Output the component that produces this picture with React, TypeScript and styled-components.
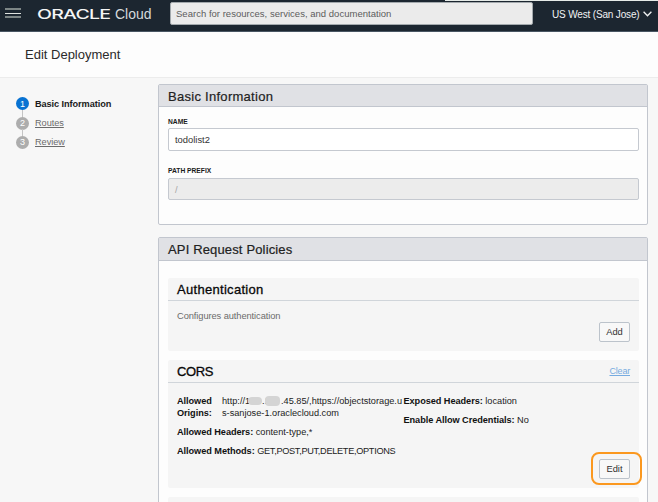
import React from 'react';
import styled, { createGlobalStyle } from 'styled-components';

const GlobalStyle = createGlobalStyle`
  *, *::before, *::after { box-sizing: border-box; }
  html, body { margin: 0; padding: 0; }
  body {
    background: #f7f7f7;
    color: #161616;
    font-family: "Liberation Sans", Arial, sans-serif;
    font-size: 9.5px;
    overflow: hidden;
  }
`;

const Page = styled.div`
  height: 502px;
  overflow: hidden;
  background: #f7f7f7;
`;

const TopBar = styled.header`
  position: relative;
  display: flex;
  align-items: flex-start;
  height: 32px;
  background: #1c2630;
  border-bottom: 1px solid #495663;
`;

const TopStrip = styled.div`
  position: absolute;
  top: 0;
  left: 445px;
  right: 0;
  height: 1px;
  background: #e6ebe8;
`;

const MenuButton = styled.button`
  display: flex;
  flex-direction: column;
  justify-content: space-between;
  width: 16px;
  height: 10px;
  margin: 8px 0 0 5px;
  padding: 0;
  border: 0;
  background: none;
`;

const MenuLine = styled.span<{ $bright?: boolean }>`
  height: ${(p) => (p.$bright ? 1 : 2)}px;
  background: ${(p) => (p.$bright ? '#dfe2df' : '#7d8686')};
`;

const Brand = styled.svg`
  width: 116px;
  height: 20px;
  margin: 4px 0 0 16px;
  fill: #f4f5f5;
`;

const SearchBox = styled.div`
  width: 363px;
  height: 23px;
  margin: 2px 0 0 17px;
  padding-left: 5px;
  border: 1px solid #a3a9ad;
  border-radius: 2px;
  background: #ebebeb;
  color: #5c5c5c;
  font: 9.5px/22px "Liberation Sans", Arial, sans-serif;
  letter-spacing: 0.02px;
  white-space: nowrap;
`;

const Region = styled.div`
  display: flex;
  align-items: center;
  gap: 3px;
  height: 12px;
  margin: 8px 0 0 19px;
  color: #f1f2f3;
  font-size: 10px;
  letter-spacing: -0.16px;
  white-space: nowrap;
`;

const TitleBar = styled.div`
  height: 46px;
  padding-left: 25px;
  border-bottom: 1px solid #ececec;
  background: #fdfdfd;
`;

const PageTitle = styled.h1`
  margin: 0;
  color: #2b2b2b;
  font-size: 13px;
  font-weight: 400;
  line-height: 46px;
`;

const Body = styled.div`
  display: grid;
  grid-template-columns: 158px 490px;
`;

const Steps = styled.ol`
  margin: 16px 0 0 16px;
  padding: 0;
  list-style: none;
`;

const Step = styled.li<{ $active?: boolean }>`
  position: relative;
  display: flex;
  align-items: center;
  gap: 6px;
  height: 19.4px;
  color: ${(p) => (p.$active ? '#1b1b1b' : '#6b6b6b')};
  font-size: 9.2px;
  font-weight: ${(p) => (p.$active ? 700 : 400)};
  letter-spacing: ${(p) => (p.$active ? '-0.08px' : '-0.05px')};

  &:not(:last-child)::after {
    content: '';
    position: absolute;
    left: 6px;
    top: 16px;
    width: 1px;
    height: 7px;
    background: #c4c4c4;
  }
`;

const StepName = styled.span<{ $active?: boolean }>`
  text-decoration: ${(p) => (p.$active ? 'none' : 'underline')};
`;

const StepBadge = styled.span<{ $active?: boolean }>`
  display: inline-flex;
  align-items: center;
  justify-content: center;
  width: 13px;
  height: 13px;
  border-radius: 50%;
  background: ${(p) => (p.$active ? '#0872d2' : '#adadad')};
  color: #fff;
  font-size: 9px;
  font-weight: 400;
`;

const Content = styled.main`
  padding-top: 6px;
`;

const Panel = styled.section<{ $height: number; $headerHeight: number }>`
  display: grid;
  grid-template-rows: ${(p) => p.$headerHeight}px 1fr;
  height: ${(p) => p.$height}px;
  margin-bottom: 12px;
  border: 1px solid #c2c6ce;
  border-radius: 2px;
  background: #fdfdfd;
`;

const PanelTitle = styled.h2<{ $tracking: number }>`
  margin: 0;
  padding-left: 9px;
  border-bottom: 1px solid #c2c6ce;
  background: #e0e1e5;
  color: #222;
  font-size: 13px;
  font-weight: 400;
  letter-spacing: ${(p) => p.$tracking}px;
  line-height: 23px;
  -webkit-text-stroke: 0.2px #222;
`;

const Form = styled.div`
  padding: 9px 8px 0 9px;
`;

const Field = styled.div`
  display: flex;
  flex-direction: column;
  height: 49px;
`;

const Label = styled.label`
  flex: 1;
  max-height: 12px;
  color: #1a1a1a;
  font-size: 6.7px;
  font-weight: 700;
  line-height: 11px;
`;

const Input = styled.div<{ $disabled?: boolean }>`
  height: ${(p) => (p.$disabled ? 22 : 23)}px;
  margin-top: ${(p) => (p.$disabled ? 1 : 0)}px;
  padding-left: 6px;
  border: 1px solid #c5c9d0;
  border-radius: 2px;
  background: ${(p) => (p.$disabled ? '#ececec' : '#fff')};
  color: ${(p) => (p.$disabled ? '#a5a5a5' : '#333')};
  font-size: 9.4px;
  line-height: 22px;
`;

const Cards = styled.div`
  display: flex;
  flex-direction: column;
  gap: 9px;
  padding: 17px 8px 0 9px;
`;

const Card = styled.article<{ $height: number }>`
  display: grid;
  grid-template-rows: 23px 1fr;
  height: ${(p) => p.$height}px;
  border-radius: 2px;
  background: #f5f5f5;
`;

const CardHead = styled.div`
  display: flex;
  justify-content: space-between;
  padding: 0 9px;
  border-bottom: 1px solid #d0d5da;
  line-height: 24px;
`;

const CardTitle = styled.h3<{ $tracking: number }>`
  margin: 0;
  color: #080808;
  font-size: 13px;
  font-weight: 400;
  letter-spacing: ${(p) => p.$tracking}px;
  -webkit-text-stroke: 0.3px #080808;
`;

const ClearLink = styled.a`
  color: #76abe0;
  font-size: 9px;
  letter-spacing: -0.2px;
  line-height: 22px;
  text-decoration: underline;
`;

const CardBody = styled.div`
  display: flex;
  flex-direction: column;
  justify-content: space-between;
  padding: 9px;
`;

const Hint = styled.p`
  margin: 0;
  color: #6b6b6b;
  font-size: 9.3px;
  letter-spacing: -0.08px;
  line-height: 12px;
`;

const ActionButton = styled.button`
  position: relative;
  align-self: flex-end;
  width: 31px;
  height: 20px;
  padding: 0;
  border: 1px solid #bcc3cb;
  border-radius: 2px;
  background: #f8f8f8;
  color: #303030;
  font: 9.3px/18px "Liberation Sans", Arial, sans-serif;
`;

const Highlight = styled.span`
  position: absolute;
  inset: -8px -13px -7px -9px;
  border: 2px solid #fb981f;
  border-radius: 8px;
`;

const Policies = styled.div`
  display: grid;
  grid-template-columns: 226.5px 1fr;
  color: #222;
  font-size: 9.2px;
  line-height: 12.4px;
  white-space: nowrap;
`;

const Column = styled.div`
  display: flex;
  flex-direction: column;
  gap: 6.2px;
  padding-top: 3px;
`;

const Entry = styled.div<{ $split?: boolean }>`
  display: ${(p) => (p.$split ? 'grid' : 'block')};
  grid-template-columns: 45px 1fr;
`;

const Name = styled.strong`
  color: #111;
  font-weight: 700;
  letter-spacing: -0.06px;
`;

const Methods = styled.span`
  letter-spacing: -0.31px;
`;

const Origin = styled.span`
  position: relative;
`;

const Smudge = styled.i<{ $left: number; $width: number; $height: number }>`
  position: absolute;
  left: ${(p) => p.$left}px;
  top: ${(p) => 6 - p.$height / 2}px;
  width: ${(p) => p.$width}px;
  height: ${(p) => p.$height}px;
  border-radius: 4px;
  background: #d4d4d4;
`;

const Masked = styled.span<{ $width: number }>`
  display: inline-block;
  width: ${(p) => p.$width}px;
`;

function TopNavigation() {
  return (
    <TopBar>
      <TopStrip />
      <MenuButton aria-label="Menu">
        <MenuLine />
        <MenuLine $bright />
        <MenuLine />
      </MenuButton>
      <Brand viewBox="0 0 116 20">
        <text transform="translate(0 14.8) scale(1.5 1)" fontFamily="Inter, sans-serif" fontWeight="500" fontSize="13" textLength="49.4" lengthAdjust="spacing">ORACLE</text>
        <text x="78" y="15" fontFamily="Liberation Sans, sans-serif" fontSize="14" fill="#d5d9dc" textLength="36.5" lengthAdjust="spacingAndGlyphs">Cloud</text>
      </Brand>
      <SearchBox>Search for resources, services, and documentation</SearchBox>
      <Region>
        US West (San Jose)
        <svg width="9" height="6" viewBox="0 0 9 6" fill="none" stroke="#f1f2f3" strokeWidth="1.3">
          <path d="M0.6 0.8 4.5 4.8 8.4 0.8" />
        </svg>
      </Region>
    </TopBar>
  );
}

export default function App() {
  return (
    <Page>
      <GlobalStyle />
      <TopNavigation />
      <TitleBar>
        <PageTitle>Edit Deployment</PageTitle>
      </TitleBar>
      <Body>
        <Steps>
          <Step $active><StepBadge $active>1</StepBadge><StepName $active>Basic Information</StepName></Step>
          <Step><StepBadge>2</StepBadge><StepName>Routes</StepName></Step>
          <Step><StepBadge>3</StepBadge><StepName>Review</StepName></Step>
        </Steps>
        <Content>
          <Panel $height={141} $headerHeight={22}>
            <PanelTitle $tracking={0.28}>Basic Information</PanelTitle>
            <Form>
              <Field>
                <Label>NAME</Label>
                <Input>todolist2</Input>
              </Field>
              <Field>
                <Label>PATH PREFIX</Label>
                <Input $disabled>/</Input>
              </Field>
            </Form>
          </Panel>
          <Panel $height={300} $headerHeight={23}>
            <PanelTitle $tracking={0.15}>API Request Policies</PanelTitle>
            <Cards>
              <Card $height={73}>
                <CardHead><CardTitle $tracking={0.3}>Authentication</CardTitle></CardHead>
                <CardBody>
                  <Hint>Configures authentication</Hint>
                  <ActionButton>Add</ActionButton>
                </CardBody>
              </Card>
              <Card $height={128}>
                <CardHead>
                  <CardTitle $tracking={-0.4}>CORS</CardTitle>
                  <ClearLink>Clear</ClearLink>
                </CardHead>
                <CardBody>
                  <Policies>
                    <Column>
                      <Entry $split>
                        <Name>Allowed<br />Origins:</Name>
                        <Origin>
                          http://<Masked $width={17}>1</Masked><Masked $width={3}>.</Masked><Masked $width={16}>2</Masked>.45.85/,https://objectstorage.u<br />s-sanjose-1.oraclecloud.com
                          <Smudge $left={26} $width={14} $height={8} />
                          <Smudge $left={43} $width={15} $height={10} />
                        </Origin>
                      </Entry>
                      <Entry><Name>Allowed Headers:</Name> content-type,*</Entry>
                      <Entry><Name>Allowed Methods:</Name> <Methods>GET,POST,PUT,DELETE,OPTIONS</Methods></Entry>
                    </Column>
                    <Column>
                      <Entry><Name>Exposed Headers:</Name> location</Entry>
                      <Entry><Name>Enable Allow Credentials:</Name> No</Entry>
                    </Column>
                  </Policies>
                  <ActionButton>Edit<Highlight /></ActionButton>
                </CardBody>
              </Card>
              <Card $height={23} />
            </Cards>
          </Panel>
        </Content>
      </Body>
    </Page>
  );
}
